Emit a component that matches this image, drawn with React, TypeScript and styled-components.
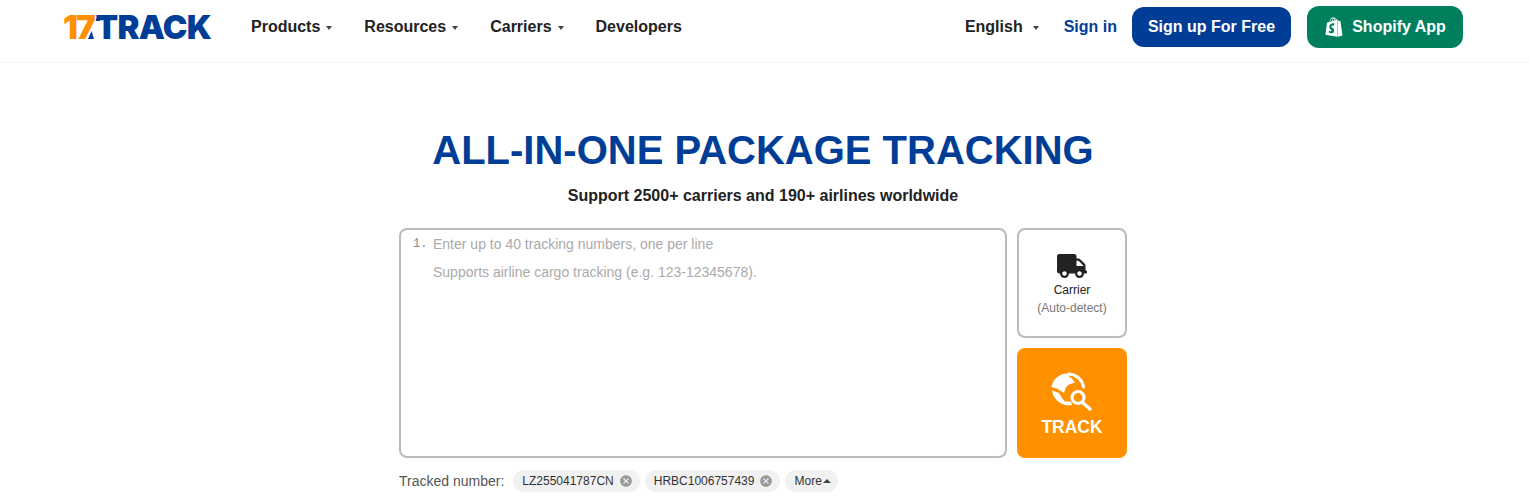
import React from 'react';
import styled, { createGlobalStyle } from 'styled-components';
import { FaShopify, FaTruck } from 'react-icons/fa';
import { MdCancel } from 'react-icons/md';

const GlobalStyle = createGlobalStyle`
  html, body {
    margin: 0;
    padding: 0;
    background: #fff;
    font-family: "Liberation Sans", Arial, sans-serif;
  }
`;

const Page = styled.div`
  height: 502px;
  overflow: hidden;
`;

const Header = styled.header`
  display: flex;
  align-items: center;
  justify-content: space-between;
  box-sizing: border-box;
  height: 63px;
  padding: 0 66px 9px 63px;
  border-bottom: 1px solid #f4f4f4;
`;

const Side = styled.div`
  display: flex;
  align-items: center;
`;

const Logo = styled.a`
  display: flex;
  align-items: center;
  width: 149px;
  margin-right: 39px;
  font-family: Inter, "Liberation Sans", sans-serif;
  font-size: 33px;
  font-weight: 900;
  line-height: 24px;
  letter-spacing: -0.7px;
  color: #003d96;
`;

const LogoNum = styled.span`
  color: #ff9000;
  letter-spacing: -2px;
`;

const LogoSlash = styled.svg`
  flex: none;
  margin: 0 -4px 0 -6px;
`;

const NavItem = styled.a<{ $gap?: number }>`
  display: flex;
  align-items: center;
  margin-right: ${p => p.$gap ?? 0}px;
  font-size: 16px;
  font-weight: 700;
  color: #222;
`;

const Caret = styled.span<{ $left: number }>`
  width: 0;
  height: 0;
  margin-left: ${p => p.$left}px;
  margin-top: 2px;
  border-left: 3.5px solid transparent;
  border-right: 3.5px solid transparent;
  border-top: 4.5px solid #444;
`;

const SignIn = styled.a`
  margin: 0 15px 0 25px;
  font-size: 16px;
  font-weight: 700;
  color: #003d96;
`;

const Pill = styled.a<{ $bg: string; $w: number; $h: number; $left?: number }>`
  display: flex;
  align-items: center;
  justify-content: center;
  gap: 8px;
  box-sizing: border-box;
  width: ${p => p.$w}px;
  height: ${p => p.$h}px;
  margin-left: ${p => p.$left ?? 0}px;
  border-radius: 12px;
  background: ${p => p.$bg};
  font-size: 16px;
  font-weight: 700;
  color: #fff;
`;

const Main = styled.main`
  display: flex;
  flex-direction: column;
  align-items: center;
  padding: 63px 3px 0 0;
`;

const Title = styled.h1`
  margin: 0;
  font-size: 40px;
  line-height: 48px;
  font-weight: 700;
  color: #003d96;
`;

const Subtitle = styled.p`
  margin: 12px 0 22px;
  font-size: 16px;
  line-height: 20px;
  font-weight: 700;
  color: #222;
`;

const Form = styled.div`
  display: grid;
  grid-template-columns: 608px 110px;
  grid-template-rows: 110px 110px;
  gap: 10px;
  width: 728px;
`;

const InputBox = styled.div`
  grid-row: 1 / span 2;
  display: grid;
  grid-template-columns: 18px 1fr;
  align-content: start;
  column-gap: 2px;
  box-sizing: border-box;
  padding: 4px 12px;
  border: 2px solid #bbb;
  border-radius: 8px;
`;

const LineNo = styled.span`
  font-family: "Liberation Mono", monospace;
  font-size: 12px;
  line-height: 20px;
  color: #888;
`;

const Hint = styled.div`
  font-size: 14px;
  line-height: 28px;
  color: #aaa;
  margin-top: -4px;
`;

const CarrierBox = styled.button`
  display: flex;
  flex-direction: column;
  align-items: center;
  padding: 21px 0 0;
  border: 2px solid #bbb;
  border-radius: 8px;
  background: #fff;
  font-family: inherit;
`;

const CarrierName = styled.span`
  font-size: 12px;
  line-height: 18px;
  color: #222;
`;

const CarrierSub = styled.span`
  font-size: 12px;
  line-height: 18px;
  color: #777;
`;

const TrackButton = styled.button`
  display: flex;
  flex-direction: column;
  align-items: center;
  padding: 18px 0 0;
  border: none;
  border-radius: 8px;
  background: #ff9000;
  font-family: inherit;
  font-size: 17.5px;
  line-height: 22px;
  font-weight: 700;
  color: #fff;
`;

const HistoryRow = styled.div`
  display: flex;
  align-items: center;
  gap: 5px;
  width: 728px;
  margin-top: 12px;
`;

const HistoryLabel = styled.span`
  margin-right: 4px;
  font-size: 14px;
  color: #555;
`;

const Chip = styled.span`
  display: flex;
  align-items: center;
  gap: 5px;
  height: 22px;
  padding: 0 7px 0 9px;
  border-radius: 11px;
  background: #f1f1f1;
  font-size: 12px;
  color: #333;
`;

const ChipClose = styled(MdCancel)`
  font-size: 14px;
  color: #999;
`;

const MoreCaret = styled.span`
  width: 0;
  height: 0;
  margin-left: -4px;
  border-left: 4px solid transparent;
  border-right: 4px solid transparent;
  border-bottom: 4px solid #444;
`;

const TrackIcon = () => (
  <svg width="55" height="50" viewBox="0 0 55 50" fill="none">
    <path
      d="M24 7.5A16 16 0 0 0 6.5 21L12 22.5L19 27L21 21L24 18.5L30 16.5L26.5 12L24.5 11.5Z"
      fill="#fff"
    />
    <path d="M7 24.5L14 27L17 32L20 35.5L26 35.5L27 39A17 17 0 0 1 7 24.5Z" fill="#fff" />
    <path d="M24 8A15.5 15.5 0 0 1 38.5 21" stroke="#fff" strokeWidth="3" strokeLinecap="round" />
    <circle cx="33" cy="31.5" r="6" stroke="#fff" strokeWidth="3.2" />
    <path d="M37.5 36.5L45 43" stroke="#fff" strokeWidth="3.5" strokeLinecap="round" />
  </svg>
);

const App: React.FC = () => (
  <Page>
    <GlobalStyle />
    <Header>
      <Side>
        <Logo>
          <LogoNum>17</LogoNum>
          <LogoSlash width="12" height="24" viewBox="0 0 12 24">
            <path d="M0 24L3.5 16L6 24Z" fill="#003d96" />
            <path d="M7.5 6L10 0L12 0L12 6Z" fill="#003d96" />
          </LogoSlash>
          TRACK
        </Logo>
        <NavItem $gap={32}>
          Products
          <Caret $left={6} />
        </NavItem>
        <NavItem $gap={32}>
          Resources
          <Caret $left={6} />
        </NavItem>
        <NavItem $gap={32}>
          Carriers
          <Caret $left={6} />
        </NavItem>
        <NavItem>Developers</NavItem>
      </Side>
      <Side>
        <NavItem>
          English
          <Caret $left={10} />
        </NavItem>
        <SignIn>Sign in</SignIn>
        <Pill $bg="#003d96" $w={159} $h={40}>Sign up For Free</Pill>
        <Pill $bg="#007f5f" $w={156} $h={42} $left={16}>
          <FaShopify size={20} />
          Shopify App
        </Pill>
      </Side>
    </Header>
    <Main>
      <Title>ALL-IN-ONE PACKAGE TRACKING</Title>
      <Subtitle>Support 2500+ carriers and 190+ airlines worldwide</Subtitle>
      <Form>
        <InputBox>
          <LineNo>1.</LineNo>
          <Hint>
            Enter up to 40 tracking numbers, one per line
            <br />
            Supports airline cargo tracking (e.g. 123-12345678).
          </Hint>
        </InputBox>
        <CarrierBox>
          <FaTruck size={30} color="#222" />
          <CarrierName>Carrier</CarrierName>
          <CarrierSub>(Auto-detect)</CarrierSub>
        </CarrierBox>
        <TrackButton>
          <TrackIcon />
          TRACK
        </TrackButton>
      </Form>
      <HistoryRow>
        <HistoryLabel>Tracked number:</HistoryLabel>
        <Chip>LZ255041787CN<ChipClose /></Chip>
        <Chip>HRBC1006757439<ChipClose /></Chip>
        <Chip>More<MoreCaret /></Chip>
      </HistoryRow>
    </Main>
  </Page>
);

export default App;
